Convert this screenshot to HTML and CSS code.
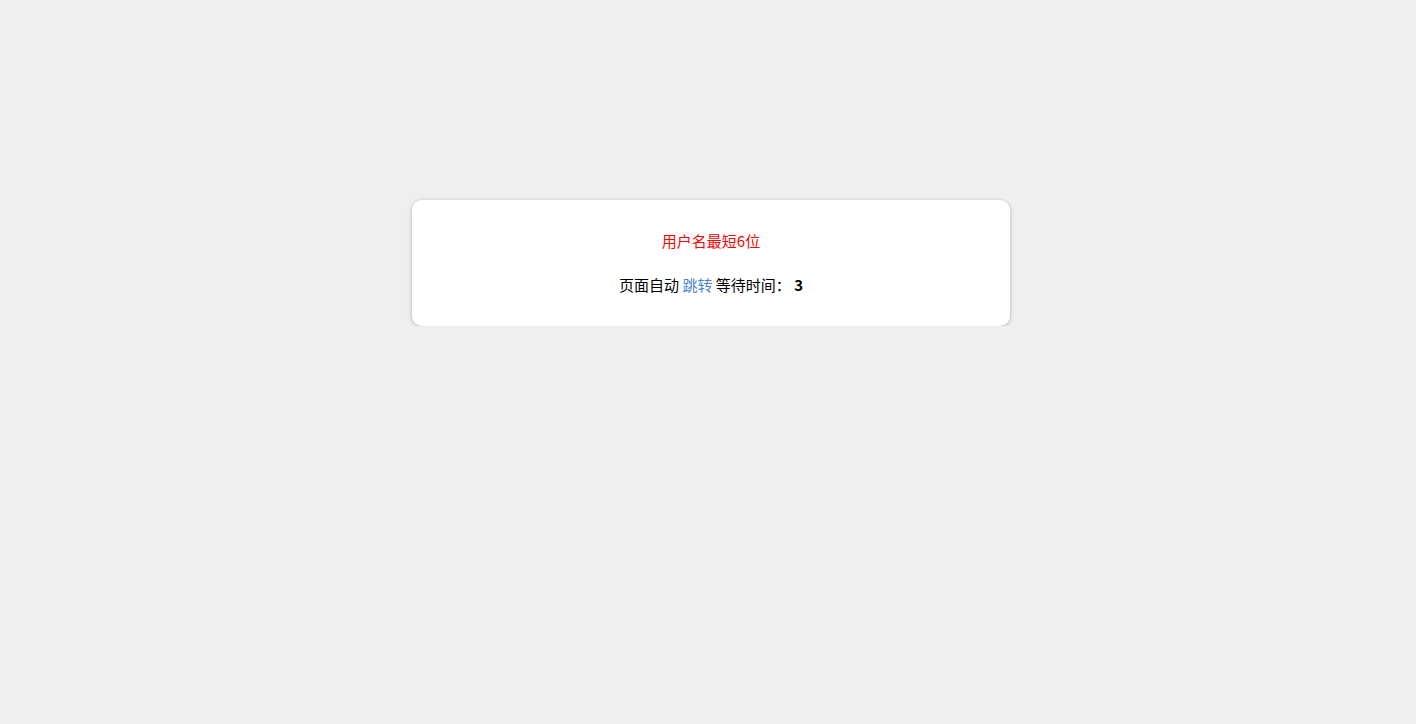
FILE: index.html
```html
<!DOCTYPE html>
<html lang="zh-CN">
<head>
<meta charset="utf-8">
<title>提示</title>
<link rel="stylesheet" href="styles.css">
</head>
<body>
<div class="page">
  <div class="card">
    <p class="msg">用户名最短6位</p>
    <p class="jump">页面自动 <a class="link" href="#">跳转</a> 等待时间： <b class="wait">3</b></p>
  </div>
</div>
</body>
</html>
```
FILE: styles.css
```css
html, body {
  margin: 0;
  padding: 0;
  background: #efefef;
  font-family: "Noto Sans CJK SC", "Noto Sans", sans-serif;
  font-size: 15px;
  color: #000;
}
.page {
  padding-top: 200px;
}
.card {
  box-sizing: border-box;
  width: 598px;
  height: 126px;
  margin-left: 412px;
  background: #fff;
  border-radius: 10px;
  box-shadow: 0 1px 4px rgba(0, 0, 0, 0.25);
  padding: 31px 0 31px;
  text-align: center;
}
.msg {
  margin: 0 0 24px;
  line-height: 20px;
  color: #ff0000;
}
.jump {
  margin: 0;
  line-height: 20px;
}
.link {
  color: #4f83d6;
  text-decoration: none;
}
.wait {
  font-weight: bold;
}
```
